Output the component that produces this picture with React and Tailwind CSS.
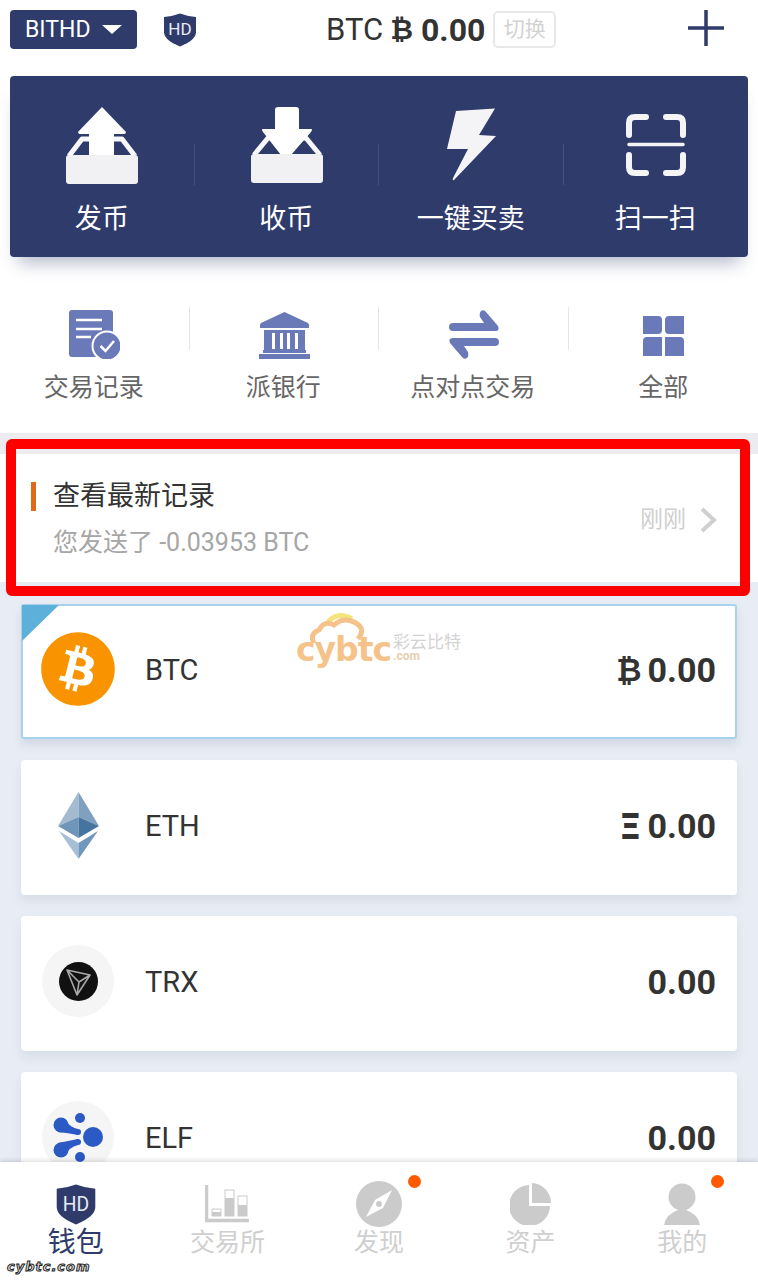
import React from "react";
import { FaBitcoin } from "react-icons/fa";

const navy = "#2f3b6b";
const periwinkle = "#6a7ab8";
const tabGray = "#cbcbcb";

function HdShield({ className, fill = navy, textSize = 17 }) {
  return (
    <svg viewBox="0 0 34 34" className={className}>
      <path d="M1 4 Q9 3.500 17 0.500 Q25 3.500 33 4 V19 Q33 27 17 33.500 Q1 27 1 19 Z" fill={fill} />
      <text x="17" y="22" textAnchor="middle" fontSize={textSize} fontFamily="Roboto, sans-serif" fill="#e8ebf5">
        HD
      </text>
    </svg>
  );
}

function SendIcon() {
  return (
    <svg width="72" height="78" viewBox="0 0 72 78">
      <path d="M3 50 L16 33 H56 L69 50" fill="none" stroke="#f8f8f8" strokeWidth="5" strokeLinejoin="round" />
      <path d="M36 1 L60 26 Q60 28 58 28 H48 V50 H23 V28 H14 Q12 28 12 26 Z" fill="#fff" />
      <rect x="0" y="49" width="72" height="29" rx="3" fill="#f1f1f3" />
    </svg>
  );
}

function ReceiveIcon() {
  return (
    <svg width="72" height="76" viewBox="0 0 72 76">
      <path d="M3 48 L17 31 H55 L69 48" fill="none" stroke="#f8f8f8" strokeWidth="5" strokeLinejoin="round" />
      <path d="M27 0 H45 Q48 0 48 3 V22 H60 Q62 22 60 25 L40 48 H30 L12 25 Q10 22 12 22 H24 V3 Q24 0 27 0 Z" fill="#fff" />
      <rect x="0" y="47" width="72" height="29" rx="3" fill="#f1f1f3" />
    </svg>
  );
}

function BoltIcon() {
  return (
    <svg width="50" height="74" viewBox="0 0 50 74">
      <path d="M10 3 L49 0.500 L33 27 L50 28 L8 72 Q6 73 7 70 L22 41 L1 41 Z" fill="#f4f4f6" strokeLinejoin="round" />
    </svg>
  );
}

function ScanIcon() {
  return (
    <svg width="60" height="62" viewBox="0 0 60 62" fill="none" stroke="#f4f4f6" strokeWidth="6" strokeLinecap="round">
      <path d="M3 21 V9 Q3 3 9 3 H20" />
      <path d="M40 3 H51 Q57 3 57 9 V21" />
      <path d="M3 41 V53 Q3 59 9 59 H20" />
      <path d="M40 59 H51 Q57 59 57 53 V41" />
      <path d="M3 30.500 H57" strokeWidth="3.500" />
    </svg>
  );
}

function RecordIcon() {
  return (
    <svg width="51" height="49" viewBox="0 0 51 49">
      <path d="M3 0 H41 Q44 0 44 3 V46 Q44 47 41 47 H3 Q0 47 0 44 V3 Q0 0 3 0 Z" fill={periwinkle} />
      <path d="M7 10 H33 M7 19 H33 M7 27 H22" stroke="#fff" strokeWidth="2.500" />
      <circle cx="38" cy="36" r="14.500" fill={periwinkle} stroke="#fff" strokeWidth="2" />
      <path d="M31.500 36 L36.500 41 L45 31" fill="none" stroke="#fff" strokeWidth="2.500" />
    </svg>
  );
}

function BankIcon() {
  return (
    <svg width="51" height="47" viewBox="0 0 51 47" fill={periwinkle} className="mt-[2px]">
      <path d="M25.500 0 L49 11 Q51 13 50 16 H1 Q0 13 2 11 Z" />
      <path d="M5 18 H46 V38 H5 Z" />
      <path d="M13 21 H16 V37 H13 Z M21 21 H24 V37 H21 Z M28 21 H31 V37 H28 Z M36 21 H39 V37 H36 Z" fill="#fff" />
      <path d="M4 38 H47 V41 H4 Z M0 42 H51 V47 H0 Z" />
    </svg>
  );
}

function SwapIcon() {
  return (
    <svg width="50" height="49" viewBox="0 0 50 49" fill={periwinkle}>
      <path d="M32 1 Q35 -1 37 2 L49 16 Q51 21 46 21 H4 Q0 21 0 17 Q0 13 4 13 H35 L31 7 Q30 3 32 1 Z" />
      <path d="M18 48 Q15 50 13 47 L1 33 Q-1 28 4 28 H46 Q50 28 50 32 Q50 36 46 36 H15 L19 42 Q20 46 18 48 Z" />
    </svg>
  );
}

function AllIcon() {
  return (
    <svg width="41" height="40" viewBox="0 0 41 40" fill={periwinkle} className="mt-[4px]">
      <path d="M0 0 H15 Q19 0 19 4 V14 Q19 18 15 18 H0 Z" />
      <path d="M22 4 Q22 0 26 0 H41 V18 H26 Q22 18 22 14 Z" />
      <path d="M4 21 H19 V40 H0 V25 Q0 21 4 21 Z" />
      <path d="M22 21 H37 Q41 21 41 25 V40 H22 Z" />
    </svg>
  );
}

function BtcCoin() {
  return (
    <div className="w-[72px] h-[72px] flex items-center justify-center">
      <FaBitcoin size={76} color="#f99400" className="shrink-0" />
    </div>
  );
}

function EthCoin() {
  return (
    <div className="w-[72px] h-[72px] flex items-center justify-center">
      <svg width="41" height="67" viewBox="0 0 41 67">
        <path d="M20.500 0 L0 34 L20.500 25 Z" fill="#a3bad0" />
        <path d="M20.500 0 L41 34 L20.500 25 Z" fill="#7fa0bf" />
        <path d="M0 34 L20.500 25 V46 Z" fill="#6f95b8" />
        <path d="M41 34 L20.500 25 V46 Z" fill="#44749f" />
        <path d="M1 39 L20.500 51 V67 Z" fill="#a7bfd4" />
        <path d="M40 39 L20.500 51 V67 Z" fill="#6f98bc" />
      </svg>
    </div>
  );
}

function TrxCoin() {
  return (
    <div className="w-[72px] h-[72px] rounded-full bg-[#f5f5f5] flex items-center justify-center">
      <svg width="39" height="39" viewBox="0 0 39 39">
        <circle cx="19.500" cy="19.500" r="19.500" fill="#111" />
        <path d="M8 8 L31 13 L18 33 Z M8 8 L20 20 L31 13 M20 20 L18 33" fill="none" stroke="#a8a8a8" strokeWidth="1.600" strokeLinejoin="round" />
      </svg>
    </div>
  );
}

function ElfCoin() {
  return (
    <div className="w-[72px] h-[72px] rounded-full bg-[#f5f5f5] flex items-center justify-center">
      <svg width="56" height="56" viewBox="0 0 56 56" fill="#2b5ac5">
        <circle cx="43" cy="28" r="10" />
        <circle cx="11" cy="16" r="7.500" />
        <circle cx="11" cy="41" r="7.500" />
        <circle cx="30" cy="9" r="5" />
        <circle cx="30" cy="48" r="5" />
        <circle cx="28" cy="23" r="3" />
        <circle cx="28" cy="33" r="3" />
        <path d="M15 10 Q19 18 28 20 V26 Q18 24 8 23 Z M8 34 Q18 32 28 30 V36 Q19 38 15 47 Z" />
      </svg>
    </div>
  );
}

function ChartTab() {
  return (
    <svg width="44" height="38" viewBox="0 0 44 38">
      <path d="M1.500 0 V35.500 H44" fill="none" stroke={tabGray} strokeWidth="3.500" />
      <path d="M7 24 H16 V31 H7 Z" fill="none" stroke={tabGray} strokeWidth="1" />
      <rect x="7" y="27" width="9" height="4" fill={tabGray} />
      <rect x="20" y="5" width="9" height="26" fill="none" stroke={tabGray} strokeWidth="1" />
      <rect x="20" y="13" width="9" height="18" fill={tabGray} />
      <rect x="33" y="11" width="9" height="20" fill="none" stroke={tabGray} strokeWidth="1" />
      <rect x="33" y="20" width="9" height="11" fill={tabGray} />
    </svg>
  );
}

function CompassTab() {
  return (
    <svg width="46" height="46" viewBox="0 0 46 46">
      <circle cx="23" cy="23" r="23" fill={tabGray} />
      <path d="M36 9 L27 27 L10 36 L19 19 Z" fill="#fff" />
      <circle cx="23" cy="23" r="3" fill={tabGray} />
    </svg>
  );
}

function PieTab() {
  return (
    <svg width="42" height="42" viewBox="0 0 42 42" fill={tabGray}>
      <path d="M19 2 V23 H40 A20.500 20.500 0 1 1 19 2 Z" />
      <path d="M22 0 A20 20 0 0 1 41 20 H22 Z" />
    </svg>
  );
}

function UserTab() {
  return (
    <svg width="36" height="42" viewBox="0 0 36 42" fill={tabGray}>
      <circle cx="18" cy="14" r="13.500" />
      <path d="M0 42 Q2 31 14 27 H22 Q34 31 36 42 Z" />
    </svg>
  );
}

function CloudLogo() {
  return (
    <svg width="58" height="32" viewBox="0 0 58 32" fill="none">
      <path d="M18 9 Q28 -2 42 6" stroke="#f3dd5f" strokeWidth="5" />
      <path d="M4 30 Q-1 21 9 17 Q14 7 24 12 Q34 3 46 10 Q56 16 48 26" stroke="#f3b56c" strokeWidth="5" />
    </svg>
  );
}

const bigActions = [
  { label: "发币", icon: <SendIcon /> },
  { label: "收币", icon: <ReceiveIcon /> },
  { label: "一键买卖", icon: <BoltIcon /> },
  { label: "扫一扫", icon: <ScanIcon /> },
];

const smallActions = [
  { label: "交易记录", icon: <RecordIcon /> },
  { label: "派银行", icon: <BankIcon /> },
  { label: "点对点交易", icon: <SwapIcon /> },
  { label: "全部", icon: <AllIcon /> },
];

const coins = [
  { name: "BTC", icon: <BtcCoin />, prefix: "₿", active: true },
  { name: "ETH", icon: <EthCoin />, prefix: "Ξ" },
  { name: "TRX", icon: <TrxCoin /> },
  { name: "ELF", icon: <ElfCoin /> },
];

const tabs = [
  { label: "钱包", icon: <HdShield className="w-[42px] h-[41px]" textSize={16} />, active: true },
  { label: "交易所", icon: <ChartTab /> },
  { label: "发现", icon: <CompassTab />, dot: true },
  { label: "资产", icon: <PieTab /> },
  { label: "我的", icon: <UserTab />, dot: true },
];

export default function App() {
  return (
    <div className="relative w-[758px] h-[1280px] overflow-hidden bg-white flex flex-col font-['Roboto','Noto_Sans_CJK_SC',sans-serif]">
      {/* top bar */}
      <div className="h-[59px] mb-[17px] flex items-center shrink-0">
        <div className="ml-[10px] w-[127px] h-[39px] rounded-[4px] bg-[#2f3b6b] text-white text-[23px] flex items-center pl-[15px] pt-[2px]">
          BITHD
          <span className="ml-[11px] -mt-[2px] w-0 h-0 border-x-[10px] border-x-transparent border-t-[9px] border-t-white" />
        </div>
        <HdShield className="ml-[26px] w-[34px] h-[34px]" />
        <div className="ml-[129px] text-[31px] text-[#333] flex items-center leading-none">
          BTC
          <span className="ml-[7px] font-bold font-['DejaVu_Sans',sans-serif] text-[28px]">₿</span>
          <span className="ml-[8px] font-bold text-[32px]">0.00</span>
        </div>
        <div className="ml-[8px] w-[63px] h-[37px] rounded-[5px] border-2 border-[#e8e8e8] text-[#d2d2d2] text-[21px] flex items-center justify-center">
          切换
        </div>
        <svg width="36" height="36" viewBox="0 0 36 36" className="ml-auto mr-[34px] -mt-[3px]">
          <path d="M18 0 V36 M0 18 H36" stroke={navy} strokeWidth="3.500" />
        </svg>
      </div>

      {/* main actions */}
      <div className="mx-[10px] h-[181px] shrink-0 rounded-[4px] bg-[#2f3b6b] grid grid-cols-4 shadow-[0_14px_16px_-8px_rgba(47,59,107,0.35)]">
        {bigActions.map((a, i) => (
          <div key={a.label} className="relative flex flex-col items-center">
            <div className="h-[78px] mt-[30px] flex items-center justify-center">{a.icon}</div>
            <div className="mt-[18px] mr-[1px] text-white text-[27px] leading-[34px]">{a.label}</div>
            {i < 3 && <span className="absolute right-0 top-[68px] h-[41px] w-px bg-[#46517f]" />}
          </div>
        ))}
      </div>

      {/* secondary actions */}
      <div className="h-[176px] shrink-0 grid grid-cols-4">
        {smallActions.map((a, i) => (
          <div key={a.label} className="relative flex flex-col items-center">
            <div className="h-[50px] mt-[52px] flex items-center justify-center">{a.icon}</div>
            <div className={i < 3 ? "mt-[11px] mr-[2px] text-[#666] text-[25px] leading-[36px]" : "mt-[11px] text-[#666] text-[25px] leading-[36px]"}>
              {a.label}
            </div>
            {i < 3 && <span className="absolute right-0 top-[50px] h-[43px] w-px bg-[#e6e6e6]" />}
          </div>
        ))}
      </div>

      {/* latest record */}
      <div className="pt-[21px] bg-[#ececf0] shrink-0">
        <div className="h-[128px] pt-[4px] bg-white flex items-center pl-[31px] pr-[41px]">
          <div className="flex-1">
            <div className="flex items-center h-[30px]">
              <span className="w-[5px] h-[29px] bg-[#e0681a]" />
              <span className="ml-[17px] text-[27px] text-[#333]">查看最新记录</span>
            </div>
            <div className="ml-[22px] mt-[15px] text-[25px] leading-[32px] text-[#a6a6a6]">您发送了 -0.03953 BTC</div>
          </div>
          <span className="text-[23px] text-[#cfcfcf]">刚刚</span>
          <svg width="18" height="26" viewBox="0 0 18 26" className="ml-[13px]">
            <path d="M3 2 L15 13 L3 24" fill="none" stroke="#cfcfcf" strokeWidth="4" />
          </svg>
        </div>
      </div>

      {/* wallet list */}
      <div className="flex-1 min-h-0 overflow-hidden bg-[#e8ecf4] px-[21px] pt-[22px] flex flex-col gap-[21px]">
        {coins.map((c) => (
          <div
            key={c.name}
            className={
              c.active
                ? "relative h-[135px] shrink-0 rounded-[3px] bg-white border-2 border-[#a9d3ea] flex items-center pl-[19px] pr-[19px] shadow-[0_6px_10px_rgba(120,140,170,0.2)]"
                : "relative h-[135px] shrink-0 rounded-[4px] bg-white flex items-center pl-[21px] pr-[21px] shadow-[0_6px_10px_rgba(120,140,170,0.15)]"
            }
          >
            {c.active && (
              <svg width="37" height="36" viewBox="0 0 37 36" className="absolute -left-[1px] -top-[1px]">
                <path d="M0 0 H37 L0 36 Z" fill="#5cb0d9" />
              </svg>
            )}
            <div className="-mt-[5px]">{c.icon}</div>
            <span className="ml-[31px] -mt-[1px] text-[29px] text-[#333]">{c.name}</span>
            <span className="ml-auto -mt-[2px] flex items-center text-[34px] font-bold text-[#333]">
              {c.name === "BTC" && <span className="mr-[6px] font-['DejaVu_Sans',sans-serif] text-[31px]">{c.prefix}</span>}
              {c.name === "ETH" && <span className="mr-[6px] font-['DejaVu_Sans',sans-serif] text-[36px] leading-none">{c.prefix}</span>}
              0.00
            </span>
          </div>
        ))}
      </div>

      {/* tab bar */}
      <div className="relative z-10 h-[118px] shrink-0 bg-white grid grid-cols-5 shadow-[0_-2px_4px_rgba(0,0,0,0.12)]">
        {tabs.map((t) => (
          <div key={t.label} className="relative flex flex-col items-center">
            <div className="h-[46px] mt-[19px] flex items-center justify-center">{t.icon}</div>
            <div className={t.active ? "text-[28px] leading-[36px] -mt-[2px] text-[#2f3b6b]" : "text-[25px] leading-[36px] -mt-[2px] text-[#cfcfcf]"}>
              {t.label}
            </div>
            {t.dot && <span className="absolute top-[13px] left-[105px] w-[13px] h-[13px] rounded-full bg-[#ff5a00]" />}
          </div>
        ))}
      </div>

      {/* red annotation over the record row */}
      <div className="absolute left-[6px] top-[439px] w-[744px] h-[157px] rounded-[6px] border-[10px] border-[#ff0000]" />

      {/* site watermarks */}
      <div className="absolute left-[296px] top-[613px] w-[170px] h-[52px] opacity-80">
        <div className="absolute left-[14px] top-0">
          <CloudLogo />
        </div>
        <span className="absolute left-0 top-[19px] text-[33px] leading-[36px] font-bold text-[#f3b56c] font-['DejaVu_Sans',sans-serif] tracking-[-1px]">
          cybtc
        </span>
        <span className="absolute left-[97px] top-[22px] text-[17px] leading-[14px] text-[#c9c9c9]">彩云比特</span>
        <span className="absolute left-[97px] top-[38px] text-[12px] leading-[11px] font-bold text-[#e0c49c]">.com</span>
      </div>
      <div className="absolute z-20 left-[7px] top-[1260px] text-[13px] leading-[14px] font-bold italic tracking-[1px] text-[#e8e8e8] [-webkit-text-stroke:1px_#222] font-['DejaVu_Sans',sans-serif]">
        cybtc.com
      </div>
    </div>
  );
}
